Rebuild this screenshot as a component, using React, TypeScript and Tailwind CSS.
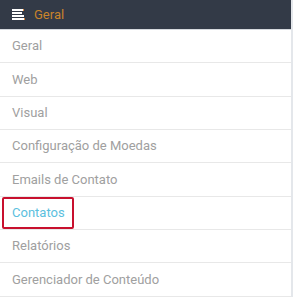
import React from 'react';

const items = [
  'Geral',
  'Web',
  'Visual',
  'Configuração de Moedas',
  'Emails de Contato',
  'Contatos',
  'Relatórios',
  'Gerenciador de Conteúdo',
];

const MenuIcon = () => (
  <svg width="14" height="12" viewBox="0 0 14 12" className="shrink-0">
    <rect x="0" y="0" width="12" height="2" fill="#ffffff" />
    <rect x="0" y="3" width="10" height="2" fill="#ffffff" />
    <rect x="0" y="6" width="12" height="2" fill="#ffffff" />
    <rect x="0" y="9" width="13" height="2" fill="#ffffff" />
    <rect x="11" y="0" width="1" height="2" fill="#e08a3a" />
    <rect x="12" y="9" width="1" height="2" fill="#e08a3a" />
  </svg>
);

export default function App() {
  return (
    <div
      className="w-[293px] h-[297px] overflow-hidden bg-white flex"
      style={{ fontFamily: 'Roboto, "Noto Sans", sans-serif' }}
    >
      <div className="w-[291px] flex flex-col">
        {/* Header */}
        <div className="h-[30px] shrink-0 bg-[#333a47] border-b border-[#d5d8dd] flex items-center pl-[12px] gap-[8px]">
          <MenuIcon />
          <span className="text-[13px] text-[#c9832b] leading-none">Geral</span>
        </div>

        {/* Menu rows */}
        {items.map((label) => {
          const active = label === 'Contatos';
          return (
            <div
              key={label}
              className="h-[33.333px] shrink-0 border-b border-[#e8e8e8] flex items-center relative"
            >
              {active && (
                <div className="absolute left-[2px] top-0 w-[72px] h-[32px] border-2 border-[#c8102e] rounded-[2px]" />
              )}
              <span
                className={
                  active
                    ? 'pl-[12px] text-[13px] text-[#5bc0de]'
                    : 'pl-[12px] text-[13px] text-[#a0a0a0]'
                }
              >
                {label}
              </span>
            </div>
          );
        })}
      </div>
      <div className="w-[2px] bg-[#e4e7eb]" />
    </div>
  );
}
